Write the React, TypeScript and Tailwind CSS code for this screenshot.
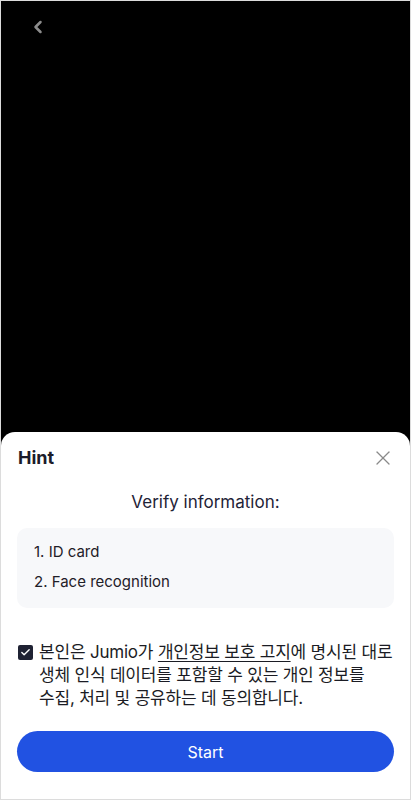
import { Check, ChevronLeft, X } from "lucide-react";

const FONT = { fontFamily: "Inter, 'Noto Sans CJK KR', sans-serif" };

export default function App() {
  return (
    <div
      className="flex h-[800px] w-[411px] flex-col border border-[#dcdcdc] bg-black"
      style={FONT}
    >
      {/* 카메라 영역 */}
      <div className="relative flex-1">
        <button className="absolute left-[27px] top-[16px] text-[#8c8c8c]">
          <ChevronLeft size={20} strokeWidth={3} />
        </button>
      </div>

      {/* 하단 시트 */}
      <div className="rounded-t-[14px] bg-white px-4 pb-[27px] pt-[14px]">
        <div className="flex h-6 items-center justify-between pl-[1px]">
          <h1 className="text-[18px] font-bold leading-none text-[#1b1c2a]">Hint</h1>
          <X size={24} strokeWidth={1.3} className="-mr-[1px] text-[#8a8a8a]" />
        </div>

        <p className="mt-5 text-center text-[17px] leading-6 text-[#1f2337]">
          Verify information:
        </p>

        <div className="mt-[14px] flex flex-col gap-2 rounded-[10px] bg-[#f7f8fa] px-[17px] pb-[15px] pt-[13px] text-[15px] leading-[22px] text-[#1f2028]">
          <p>1. ID card</p>
          <p>2. Face recognition</p>
        </div>

        <label className="mt-[33px] flex gap-[6px] pl-[1px]">
          <span className="mt-[4px] flex h-[15px] w-[15px] shrink-0 items-center justify-center rounded-[2px] bg-[#1f2233]">
            <Check size={11} strokeWidth={3} className="text-white" />
          </span>
          <span className="break-keep text-[17px] leading-[23px] tracking-[-0.2px] text-[#1b1c24]">
            본인은 Jumio가 <span className="underline underline-offset-[3px]">개인정보 보호 고지</span>에 명시된 대로 생체 인식 데이터를 포함할 수 있는 개인 정보를 수집, 처리 및 공유하는 데 동의합니다.
          </span>
        </label>

        <button className="mt-[21px] flex h-[41px] w-full items-center justify-center rounded-full bg-[#2152e2] text-[16px] text-white">
          Start
        </button>
      </div>
    </div>
  );
}
